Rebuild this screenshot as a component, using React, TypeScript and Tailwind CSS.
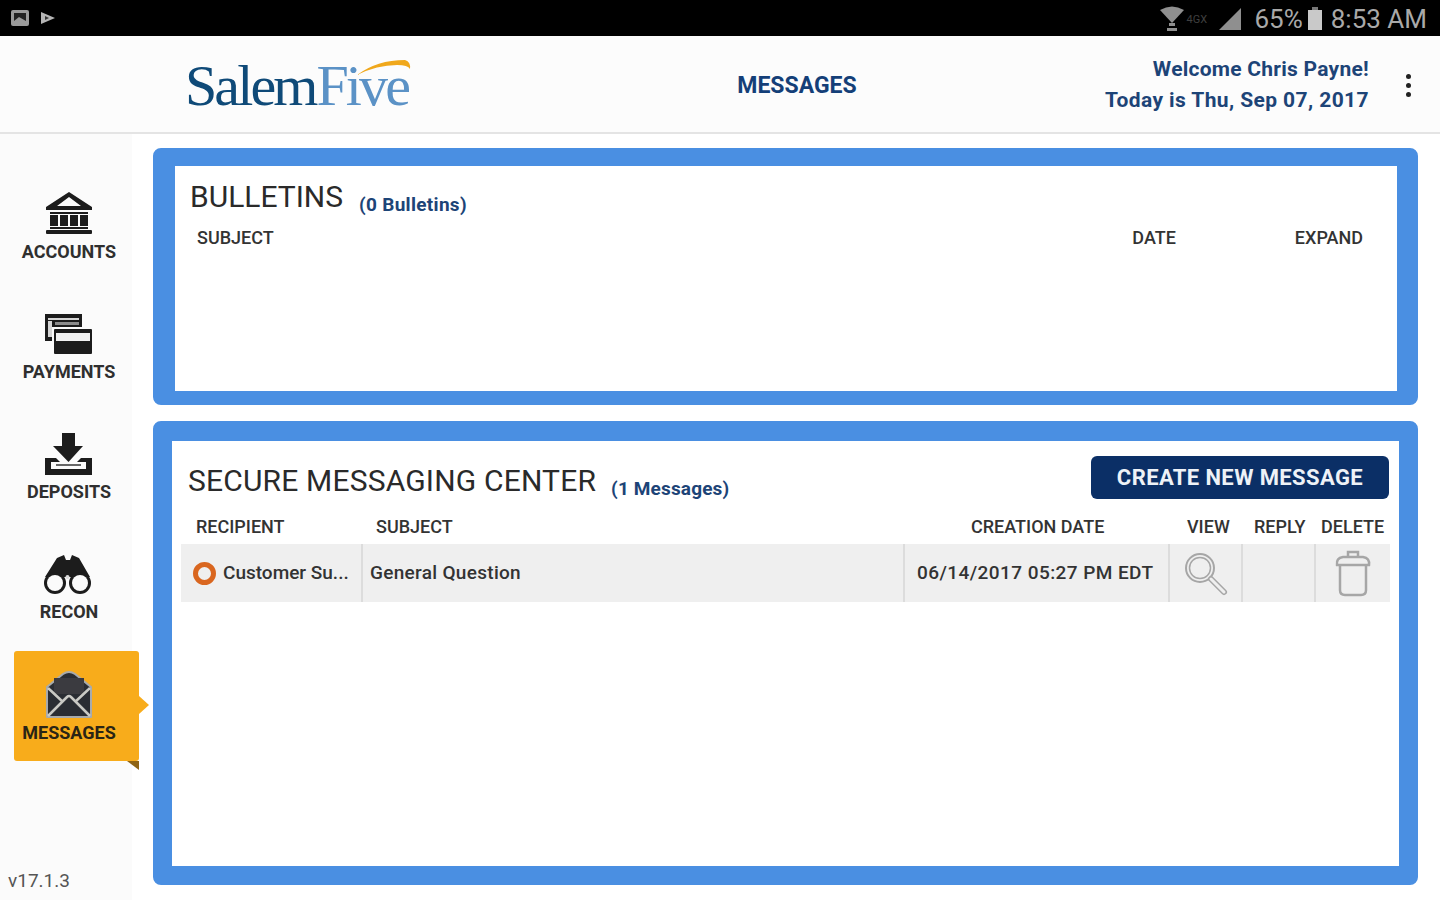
import React from 'react';

const BankIcon = () => (
  <svg width="50" height="48" viewBox="0 0 50 48" fill="#1c1c1c">
    <path d="M25 3 L48 18 V21 H2 V18 Z M25 8 L13 17 H37 Z" fillRule="evenodd" />
    <rect x="6" y="23" width="38" height="2" />
    <rect x="6" y="26" width="8" height="11" />
    <rect x="16" y="26" width="8" height="11" />
    <rect x="26" y="26" width="8" height="11" />
    <rect x="36" y="26" width="8" height="11" />
    <rect x="6" y="38" width="38" height="2" />
    <rect x="2" y="41" width="46" height="4" rx="1" />
  </svg>
);

const CardsIcon = () => (
  <svg width="50" height="48" viewBox="0 0 50 48" fill="#1c1c1c">
    <path d="M1 5 H38 V18 H10 V32 H1 Z" />
    <rect x="4" y="9" width="31" height="2" fill="#d5d5d5" />
    <rect x="4" y="12" width="4" height="16" fill="#d5d5d5" />
    <rect x="11" y="13" width="24" height="3" fill="#8c8c8c" />
    <rect x="8" y="18" width="42" height="28" fill="#fbfbfb" />
    <rect x="10" y="20" width="38" height="25" rx="1" />
    <rect x="12" y="24" width="34" height="8" fill="#f2f2f2" />
  </svg>
);

const DepositIcon = () => (
  <svg width="50" height="48" viewBox="0 0 50 48" fill="#1c1c1c">
    <path d="M18 4 H31 V17 H39 L24.5 33 L9 17 H18 Z" />
    <path d="M1 29 H12 L16 33 H7 V40 H42 V33 H33 L37 29 H48 V46 H1 Z" />
    <rect x="12" y="35" width="25" height="2" fill="#666" />
  </svg>
);

const BinocularsIcon = () => (
  <svg width="52" height="48" viewBox="0 0 52 48" fill="#1c1c1c">
    <path d="M14 9 L21 6 L23 11 H27 L29 6 L36 9 L47 28 L28 28 H22 L2 28 Z" />
    <circle cx="12" cy="34" r="11" />
    <circle cx="37" cy="34" r="11" />
    <circle cx="12" cy="34" r="8" fill="#fbfbfb" />
    <circle cx="37" cy="34" r="8" fill="#fbfbfb" />
    <circle cx="24.5" cy="28" r="2" fill="#ddd" />
  </svg>
);

const EnvelopeIcon = () => (
  <svg width="48" height="48" viewBox="0 0 48 48">
    <path d="M2 17 L18 4 Q24 0 30 4 L46 17 V47 H2 Z" fill="#2a2d33" stroke="#a7aaac" strokeWidth="2" strokeLinejoin="round" />
    <rect x="9" y="8" width="30" height="16" fill="#3b3b40" />
    <path d="M3 46 L22 27 Q24 25 26 27 L45 46" fill="none" stroke="#c9c9c4" strokeWidth="2.5" />
    <path d="M3 18 L18 32 M45 18 L30 32" stroke="#c9c9c4" strokeWidth="2.5" />
  </svg>
);

const navItems = [
  { label: 'ACCOUNTS', icon: <BankIcon /> },
  { label: 'PAYMENTS', icon: <CardsIcon /> },
  { label: 'DEPOSITS', icon: <DepositIcon /> },
  { label: 'RECON', icon: <BinocularsIcon /> },
  { label: 'MESSAGES', icon: <EnvelopeIcon />, active: true },
];

const StatusBar = () => (
  <div className="flex h-[36px] items-center justify-between bg-black pl-[10px] pr-[13px] text-[#a9a9a9]">
    <div className="flex items-center gap-[10px]">
      <svg width="20" height="18" viewBox="0 0 20 18">
        <rect x="1" y="1" width="18" height="16" rx="2" fill="#9a9a9a" />
        <rect x="4" y="4" width="12" height="8" fill="#222" />
        <path d="M4 12 L9 8 L16 12 Z" fill="#9a9a9a" />
      </svg>
      <svg width="16" height="14" viewBox="0 0 16 14">
        <path d="M1 1 L15 7 L1 13 Z" fill="#b5b5b5" />
        <path d="M5 5 L9 7 L5 9 Z" fill="#333" />
      </svg>
    </div>
    <div className="flex items-center pt-[2px] text-[26px] leading-none">
      <svg width="26" height="28" viewBox="0 0 26 28" fill="#8f8f8f">
        <path d="M1 5 Q13 -2 25 5 L13 18 Z" />
        <rect x="10" y="18" width="6" height="3" />
        <rect x="8" y="23" width="10" height="3" />
      </svg>
      <span className="ml-[1px] w-[32px] text-[11px] text-[#3f3f3f]">4GX</span>
      <svg width="24" height="24" viewBox="0 0 24 24" className="mr-[12px]">
        <path d="M23 1 V23 H1 Z" fill="#8f8f8f" />
      </svg>
      <span>65%</span>
      <svg width="16" height="24" viewBox="0 0 16 24" className="ml-[4px] mr-[8px]">
        <rect x="5" y="0" width="6" height="3" fill="#777" />
        <rect x="1" y="3" width="14" height="20" fill="#c9c9c9" />
      </svg>
      <span>8:53 AM</span>
    </div>
  </div>
);

const Logo = () => (
  <div className="relative ml-[185px] mt-[4px] w-[228px] whitespace-nowrap font-['Liberation_Serif',serif] text-[58px] leading-none tracking-[-0.05em]">
    <span className="text-[#0f4a78]">Salem</span>
    <span className="ml-[1px] text-[#5b92c6]">Five</span>
    <svg width="54" height="18" viewBox="0 0 54 18" className="absolute left-[172px] top-[2px]">
      <path d="M0 16 Q20 1 48 1 Q54 3 53 10 Q51 6 40 6 Q20 6 0 16 Z" fill="#f0a81c" />
    </svg>
  </div>
);

const Header = () => (
  <div className="relative flex h-[98px] items-center border-b-2 border-[#e4e4e4] bg-[#fcfcfc]">
    <Logo />
    <div className="ml-[322px] w-[124px] pt-[4px] text-center text-[23px] font-bold text-[#143f78]">MESSAGES</div>
    <div className="ml-auto mr-[71px] pt-[2px] text-right text-[21px] font-bold leading-[31px] tracking-[0.4px] text-[#1d4477]">
      <div className="tracking-[0.25px]">Welcome Chris Payne!</div>
      <div>Today is Thu, Sep 07, 2017</div>
    </div>
    {/* overflow menu dots */}
    <div className="absolute right-[29px] top-[38px] flex flex-col gap-[4px]">
      <div className="h-[5px] w-[5px] rounded-full bg-[#222]" />
      <div className="h-[5px] w-[5px] rounded-full bg-[#222]" />
      <div className="h-[5px] w-[5px] rounded-full bg-[#222]" />
    </div>
  </div>
);

const Sidebar = () => (
  <div className="flex w-[132px] flex-col gap-[10px] bg-[#fbfbfb] pl-[14px] pt-[37px]">
    {navItems.map((item) =>
      item.active ? (
        <div key={item.label} className="relative flex h-[110px] w-[125px] flex-col items-center rounded-[3px] bg-[#f8ac1b] pr-[15px] pt-[19px]">
          <div className="flex h-[48px] items-center">{item.icon}</div>
          <div className="mt-[6px] text-[18px] font-bold leading-[18px] text-[#2a2415]">{item.label}</div>
          <div className="absolute right-[-10px] top-[45px] h-0 w-0 border-y-[9px] border-l-[10px] border-y-transparent border-l-[#f8ac1b]" />
          <div className="absolute bottom-[-9px] right-0 h-0 w-0 border-l-[12px] border-t-[9px] border-l-transparent border-t-[#8f6414]" />
        </div>
      ) : (
        <div key={item.label} className="flex h-[110px] w-[125px] flex-col items-center pr-[15px] pt-[18px]">
          <div className="flex h-[48px] items-center">{item.icon}</div>
          <div className="mt-[6px] text-[18px] font-bold leading-[18px] text-[#2f2f2f]">{item.label}</div>
        </div>
      ),
    )}
    <div className="mb-[7px] ml-[-6px] mt-auto text-[19px] leading-[24px] text-[#555]">v17.1.3</div>
  </div>
);

const Bulletins = () => (
  <div className="h-[257px] rounded-lg border-b-[14px] border-l-[22px] border-r-[21px] border-t-[18px] border-[#4a8fe2] bg-white">
    <div className="flex items-baseline pl-[15px] pt-[12px]">
      <span className="text-[30px] leading-[38px] text-[#2a2a2a]">BULLETINS</span>
      <span className="ml-[16px] translate-y-[4px] text-[19px] font-bold tracking-[0.3px] text-[#1d4477]">(0 Bulletins)</span>
    </div>
    <div className="mt-[10px] flex text-[18px] font-medium leading-[24px] text-[#333]">
      <span className="ml-[22px]">SUBJECT</span>
      <span className="ml-auto">DATE</span>
      <span className="ml-[119px] mr-[34px]">EXPAND</span>
    </div>
  </div>
);

const rowGrid = 'grid grid-cols-[182px_542px_265px_73px_73px_74px]';

const Messages = () => (
  <div className="h-[464px] rounded-lg border-[19px] border-t-[20px] border-[#4a8fe2] bg-white">
    <div className="flex h-[74px] items-start pl-[16px] pr-[10px] pt-[15px]">
      <span className="mt-[6px] text-[30px] leading-[38px] tracking-[0.18px] text-[#2a2a2a]">SECURE MESSAGING CENTER</span>
      <span className="ml-[15px] mt-[19px] text-[19px] font-bold leading-[28px] tracking-[0.15px] text-[#1d4477]">(1 Messages)</span>
      <button className="ml-auto h-[43px] w-[298px] rounded-md bg-[#0b2f66] text-[22px] font-bold tracking-[0.4px] text-[#eef2f7]">
        CREATE NEW MESSAGE
      </button>
    </div>
    <div className="px-[9px]">
      <div className={`${rowGrid} h-[29px] items-center pb-[5px] text-[18px] font-medium leading-[20px] text-[#333]`}>
        <span className="pl-[15px]">RECIPIENT</span>
        <span className="pl-[13px]">SUBJECT</span>
        <span className="pl-[66px]">CREATION DATE</span>
        <span className="pl-[17px]">VIEW</span>
        <span className="pl-[11px]">REPLY</span>
        <span className="pl-[5px]">DELETE</span>
      </div>
      <div className={`${rowGrid} h-[58px] bg-[#efefef] text-[19px] font-medium text-[#333]`}>
        <div className="flex items-center border-r-2 border-[#dcdcdc] pl-[12px]">
          <div className="h-[23px] w-[23px] rounded-full border-[5px] border-[#d9661f]" />
          <span className="ml-[7px]">Customer Su...</span>
        </div>
        <div className="flex items-center border-r-2 border-[#dcdcdc] pl-[7px] tracking-[0.3px]">General Question</div>
        <div className="flex items-center border-r-2 border-[#dcdcdc] pl-[12px] tracking-[0.43px]">06/14/2017 05:27 PM EDT</div>
        <div className="flex items-center justify-center border-r-2 border-[#dcdcdc]">
          <svg width="48" height="48" viewBox="0 0 48 48" fill="none" stroke="#a6a6a6">
            <circle cx="18" cy="19" r="14" strokeWidth="2" />
            <circle cx="18" cy="19" r="10.5" strokeWidth="1.5" />
            <path d="M29 30 L42 43" strokeWidth="6" strokeLinecap="round" />
            <path d="M29 30 L42 43" strokeWidth="3" strokeLinecap="round" stroke="#efefef" />
          </svg>
        </div>
        <div className="border-r-2 border-[#dcdcdc]" />
        <div className="flex items-center justify-center">
          <svg width="38" height="50" viewBox="0 0 38 50" fill="none" stroke="#a6a6a6" strokeWidth="2.5">
            <path d="M6 17 V42 Q6 47 11 47 H27 Q32 47 32 42 V17" />
            <path d="M3 17 Q2 10 9 9 H29 Q36 10 35 17 Z" />
            <path d="M14 9 V4 H24 V9" />
          </svg>
        </div>
      </div>
    </div>
  </div>
);

const App: React.FC = () => {
  return (
    <div className="flex h-[900px] w-[1440px] flex-col overflow-hidden bg-white font-['Roboto',sans-serif]">
      <StatusBar />
      <Header />
      <div className="flex flex-1">
        <Sidebar />
        <div className="flex flex-1 flex-col gap-[16px] pl-[21px] pr-[23px] pt-[14px]">
          <Bulletins />
          <Messages />
        </div>
      </div>
    </div>
  );
};

export default App;
